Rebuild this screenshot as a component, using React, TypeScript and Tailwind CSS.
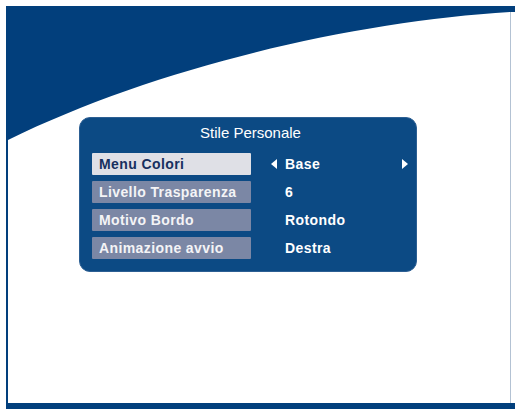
import React from "react";

const rows = [
  { label: "Menu Colori", value: "Base", active: true },
  { label: "Livello Trasparenza", value: "6", active: false },
  { label: "Motivo Bordo", value: "Rotondo", active: false },
  { label: "Animazione avvio", value: "Destra", active: false },
];

function TriLeft() {
  return (
    <svg width="6" height="10" viewBox="0 0 6 10">
      <path d="M6 0 L0 5 L6 10 Z" fill="#ffffff" />
    </svg>
  );
}

function TriRight() {
  return (
    <svg width="6" height="10" viewBox="0 0 6 10">
      <path d="M0 0 L6 5 L0 10 Z" fill="#ffffff" />
    </svg>
  );
}

export default function App() {
  return (
    <div
      className="w-[515px] h-[409px] bg-white pt-[6px] pl-[6px] flex"
      style={{ fontFamily: '"Liberation Sans", Arial, sans-serif' }}
    >
      <div className="relative flex-1 flex flex-col bg-white border-l-2 border-b-[6px] border-[#023f7c]">
        <svg
          className="absolute inset-0"
          width="507"
          height="397"
          viewBox="0 0 507 397"
        >
          <path
            d="M0 0 H507 V6 H503 C350 15 150 60 0 134 Z"
            fill="#023f7c"
          />
          <line x1="502.5" y1="6" x2="502.5" y2="397" stroke="#b3c2d3" strokeWidth="1" />
        </svg>
        <div className="relative ml-[71px] mt-[111px] w-[338px] h-[155px] rounded-[11px] bg-[#0c4a84] border border-[#2c5f93] pl-[12px] pr-[7px] pt-[6px] flex flex-col">
          <div className="text-center text-white text-[15px] leading-[18px] mb-[11px]">
            Stile Personale
          </div>
          <div className="flex flex-col gap-[6px]">
            {rows.map((r) => (
              <div key={r.label} className="flex items-center h-[22px]">
                <div
                  className={
                    r.active
                      ? "w-[159px] h-[22px] pl-[7px] bg-[#dfe0e6] text-[#17305f] font-bold text-[14px] leading-[22px] tracking-[0.4px] rounded-[1px]"
                      : "w-[159px] h-[22px] pl-[7px] bg-[#7b87a5] text-[#f4f4f6] font-bold text-[14px] leading-[22px] tracking-[0.4px] rounded-[1px]"
                  }
                >
                  {r.label}
                </div>
                <div className="w-[34px] flex justify-end pr-[8px]">
                  {r.active ? <TriLeft /> : null}
                </div>
                <div className="flex-1 text-white font-bold text-[14px] leading-[22px] tracking-[0.4px]">
                  {r.value}
                </div>
                <div className="w-[6px] mr-[1px] flex">
                  {r.active ? <TriRight /> : null}
                </div>
              </div>
            ))}
          </div>
        </div>
      </div>
    </div>
  );
}
